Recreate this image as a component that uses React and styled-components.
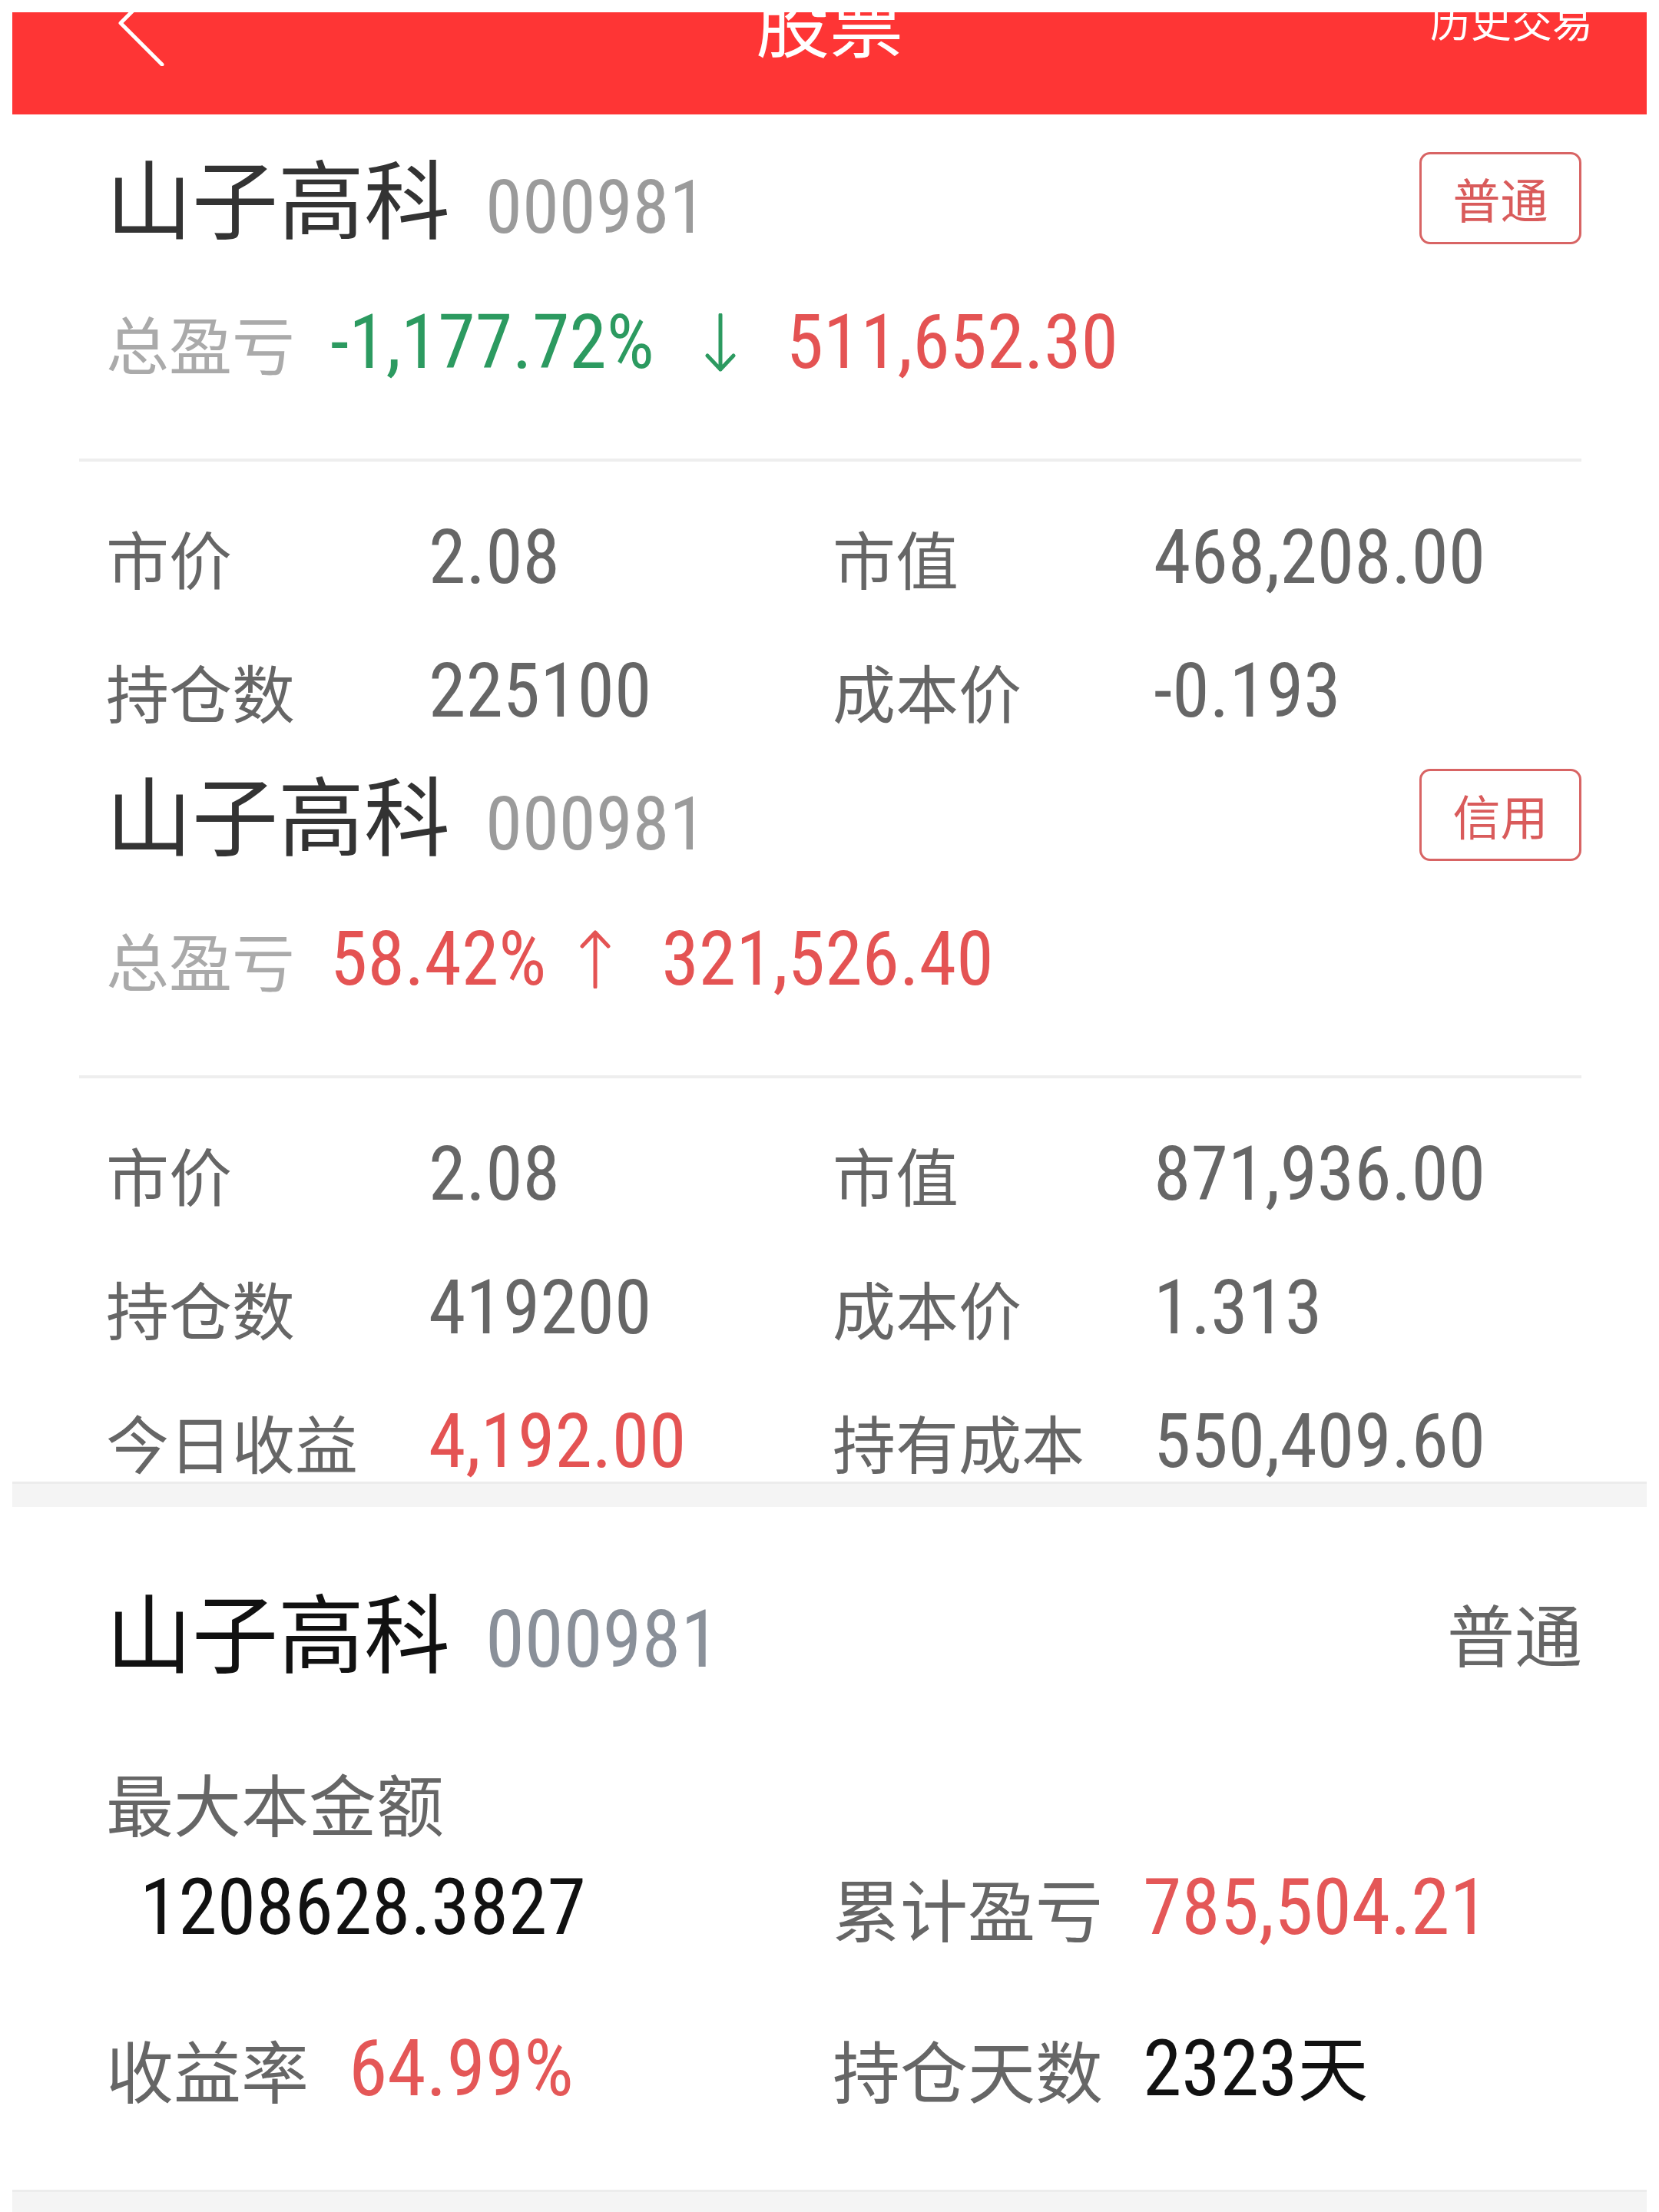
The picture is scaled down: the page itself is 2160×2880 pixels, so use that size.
import React from 'react'
import styled, { createGlobalStyle } from 'styled-components'

const NARROW = '"Roboto Condensed", "Liberation Sans Narrow", "DejaVu Sans Condensed", "Roboto", "Noto Sans CJK SC", sans-serif'

const holdings = [
    {
        id: 1,
        type: '普通',
        top: 49,
        pct: '-1,177.72%',
        up: false,
        arrowGap: 62,
        amount: '511,652.30',
        rows: [
            ['市价', '2.08', '市值', '468,208.00'],
            ['持仓数', '225100', '成本价', '-0.193'],
        ],
    },
    {
        id: 2,
        type: '信用',
        top: 14,
        clip: 487,
        pct: '58.42%',
        up: true,
        arrowGap: 40,
        amount: '321,526.40',
        rows: [
            ['市价', '2.08', '市值', '871,936.00'],
            ['持仓数', '419200', '成本价', '1.313'],
            ['今日收益', '4,192.00', '持有成本', '550,409.60', true],
        ],
    },
]

const Arrow = ({ up, color, gap }) => (
    <ArrowSvg viewBox='0 0 48 76' width='48' height='76' $gap={gap}>
        {up ? (
            <path d='M24 74 V3 M7 21 L24 3 L41 21' stroke={color} strokeWidth='5' fill='none' strokeLinecap='round' strokeLinejoin='round' />
        ) : (
            <path d='M24 2 V73 M7 55 L24 73 L41 55' stroke={color} strokeWidth='5' fill='none' strokeLinecap='round' strokeLinejoin='round' />
        )}
    </ArrowSvg>
)

const App = () => {
  return (
    <Page>
        <GlobalStyle />
        <Header>
            <BackBtn>
                <svg viewBox='0 0 60 112' width='60' height='112'>
                    <polyline points='57,2 3,56 57,110' fill='none' stroke='#ffffff' strokeWidth='5' strokeLinecap='round' strokeLinejoin='round' />
                </svg>
            </BackBtn>
            <HeaderTitle>{'股票'}</HeaderTitle>
            <HeaderLink>{'历史交易'}</HeaderLink>
        </Header>

        {holdings.map((item) => (
            <Card key={item.id}>
                <TitleRow $top={item.top}>
                    <NameGroup>
                        <Name>{'山子高科'}</Name>
                        <Code>{'000981'}</Code>
                    </NameGroup>
                    <Badge>{item.type}</Badge>
                </TitleRow>
                <ProfitRow>
                    <ProfitLabel>{'总盈亏'}</ProfitLabel>
                    <Pct $up={item.up}>{item.pct}</Pct>
                    <Arrow up={item.up} gap={item.arrowGap} color={item.up ? '#e45353' : '#2c9a60'} />
                    <Amount>{item.amount}</Amount>
                </ProfitRow>
                <Divider />
                <InfoGrid $clip={item.clip}>
                    {item.rows.map(([l1, v1, l2, v2, hot]) => (
                        <React.Fragment key={l1}>
                            <InfoLabel>{l1}</InfoLabel>
                            <InfoValue $hot={hot}>{v1}</InfoValue>
                            <InfoLabel>{l2}</InfoLabel>
                            <InfoValue>{v2}</InfoValue>
                        </React.Fragment>
                    ))}
                </InfoGrid>
            </Card>
        ))}

        <GrayBar $h={33} />

        <Summary>
            <SummaryTitle>
                <NameGroup>
                    <Name $dark>{'山子高科'}</Name>
                    <SummaryCode>{'000981'}</SummaryCode>
                </NameGroup>
                <PlainType>{'普通'}</PlainType>
            </SummaryTitle>
            <SummaryRow $top={101}>
                <SummaryLabel>{'最大本金额'}</SummaryLabel>
            </SummaryRow>
            <SummaryRow $top={17}>
                <SummaryCell>
                    <BigValue $indent={44}>{'1208628.3827'}</BigValue>
                </SummaryCell>
                <SummaryCell>
                    <SummaryLabel>{'累计盈亏'}</SummaryLabel>
                    <BigValue $red>{'785,504.21'}</BigValue>
                </SummaryCell>
            </SummaryRow>
            <SummaryRow $top={90}>
                <SummaryCell>
                    <SummaryLabel>{'收益率'}</SummaryLabel>
                    <BigValue $red>{'64.99%'}</BigValue>
                </SummaryCell>
                <SummaryCell>
                    <SummaryLabel>{'持仓天数'}</SummaryLabel>
                    <BigValue>{'2323'}<Unit>{'天'}</Unit></BigValue>
                </SummaryCell>
            </SummaryRow>
        </Summary>

        <GrayBar $h={29} $top={98} />
    </Page>
  )
}

export default App

const GlobalStyle = createGlobalStyle`
    body {
        margin: 0;
        background: #ffffff;
    }
`;

const Page = styled.div`
    padding: 16px 16px 0 16px;
    font-family: "Noto Sans CJK SC", sans-serif;
    background: #ffffff;
`;

const Header = styled.div`
    position: relative;
    height: 133px;
    overflow: hidden;
    background-color: #fe3535;
    display: grid;
    grid-template-columns: 1fr auto 1fr;
    align-items: start;
    color: #ffffff;
`;

const BackBtn = styled.div`
    margin: -42px 0 0 138px;
    svg { display: block; }
`;

const HeaderTitle = styled.div`
    margin-top: -38px;
    font-size: 96px;
    line-height: 1;
`;

const HeaderLink = styled.div`
    justify-self: end;
    margin: -16px 70px 0 0;
    font-size: 53px;
    line-height: 1;
`;

const Card = styled.div`
    display: flex;
    flex-direction: column;
    padding: 0 85px 0 87px;
`;

const TitleRow = styled.div`
    margin-top: ${(props) => props.$top}px;
    height: 120px;
    flex-shrink: 0;
    padding-left: 35px;
    display: flex;
    align-items: center;
    justify-content: space-between;
`;

const NameGroup = styled.div`
    display: flex;
    align-items: baseline;
`;

const Name = styled.span`
    font-size: 112px;
    line-height: 1;
    color: ${(props) => props.$dark ? '#111111' : '#333333'};
`;

const Code = styled.span`
    margin-left: 46px;
    font-family: ${NARROW};
    font-stretch: 82%;
    font-size: 97px;
    line-height: 1;
    color: #9b9b9b;
`;

const Badge = styled.div`
    box-sizing: border-box;
    width: 211px;
    height: 120px;
    border: 3px solid #d86464;
    border-radius: 14px;
    display: flex;
    align-items: center;
    justify-content: center;
    font-size: 62px;
    line-height: 1;
    color: #d95b5b;
`;

const ProfitRow = styled.div`
    margin-top: 68px;
    height: 120px;
    flex-shrink: 0;
    padding-left: 35px;
    display: flex;
    align-items: center;
`;

const ProfitLabel = styled.span`
    font-size: 82px;
    line-height: 1;
    color: #aaaaaa;
`;

const Pct = styled.span`
    margin-left: 46px;
    font-family: ${NARROW};
    font-stretch: 82%;
    font-size: 98px;
    line-height: 1;
    color: ${(props) => props.$up ? '#e45353' : '#2c9a60'};
`;

const ArrowSvg = styled.svg`
    display: block;
    margin-left: ${(props) => props.$gap}px;
`;

const Amount = styled.span`
    margin-left: 62px;
    font-family: ${NARROW};
    font-stretch: 82%;
    font-size: 98px;
    line-height: 1;
    color: #e45353;
`;

const Divider = styled.div`
    margin-top: 91px;
    height: 4px;
    flex-shrink: 0;
    background-color: #eeeeee;
`;

const InfoGrid = styled.div`
    margin-top: 38px;
    padding-left: 35px;
    display: grid;
    grid-template-columns: 420px 526px 418px 1fr;
    grid-auto-rows: 174px;
    align-items: center;
    ${({ $clip }) => $clip && `height: ${$clip}px; overflow: hidden;`}
`;

const InfoLabel = styled.span`
    font-size: 82px;
    line-height: 1;
    color: #666666;
`;

const InfoValue = styled.span`
    font-family: ${NARROW};
    font-stretch: 82%;
    font-size: 98px;
    line-height: 1;
    color: ${(props) => props.$hot ? '#e45353' : '#666666'};
`;

const GrayBar = styled.div`
    margin-top: ${(props) => props.$top || 0}px;
    height: ${(props) => props.$h}px;
    box-sizing: border-box;
    background-color: #f4f4f4;
    border-top: 3px solid #ececec;
`;

const Summary = styled.div`
    display: flex;
    flex-direction: column;
    padding: 0 84px 0 122px;
`;

const SummaryTitle = styled.div`
    margin-top: 103px;
    height: 120px;
    display: flex;
    align-items: center;
    justify-content: space-between;
`;

const SummaryCode = styled.span`
    margin-left: 46px;
    font-family: ${NARROW};
    font-stretch: 82%;
    font-size: 103px;
    line-height: 1;
    color: #8a9099;
`;

const PlainType = styled.span`
    font-size: 88px;
    line-height: 1;
    color: #666666;
`;

const SummaryRow = styled.div`
    margin-top: ${(props) => props.$top}px;
    height: 120px;
    display: grid;
    grid-template-columns: 946px 1fr;
    align-items: center;
`;

const SummaryCell = styled.div`
    display: flex;
    align-items: center;
`;

const SummaryLabel = styled.span`
    font-size: 88px;
    line-height: 1;
    color: #666666;
`;

const BigValue = styled.span`
    margin-left: ${(props) => props.$indent || 52}px;
    font-family: ${NARROW};
    font-stretch: 82%;
    font-size: 102px;
    line-height: 1;
    color: ${(props) => props.$red ? '#e45757' : '#111111'};
`;

const Unit = styled.span`
    font-family: "Noto Sans CJK SC", sans-serif;
    font-stretch: normal;
    font-size: 92px;
`;
